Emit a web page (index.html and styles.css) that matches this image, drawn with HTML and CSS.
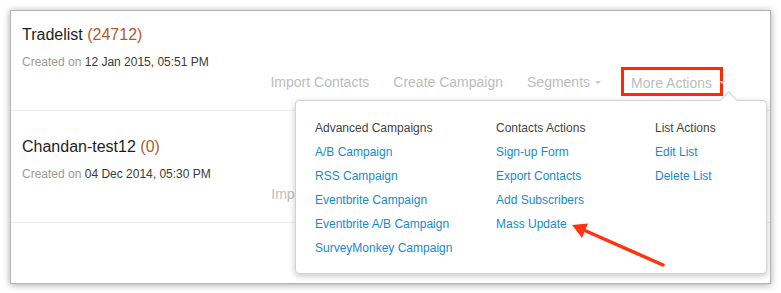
FILE: index.html
```html
<!DOCTYPE html>
<html lang="en">
<head>
<meta charset="UTF-8">
<title>Lists</title>
<link rel="stylesheet" href="styles.css">
</head>
<body>

<div class="card">
    <div class="row row-first">
        <div class="list-title">Tradelist <span class="count">(24712)</span></div>
        <div class="created"><span class="label">Created on</span> 12 Jan 2015, 05:51 PM</div>
        <div class="toolbar">
            <span class="tool">Import Contacts</span>
            <span class="tool">Create Campaign</span>
            <span class="tool">Segments<i class="caret"></i></span>
            <span class="tool more"><span class="hl">More Actions</span><i class="caret"></i></span>
        </div>
    </div>
    <div class="row">
        <div class="list-title">Chandan-test12 <span class="count">(0)</span></div>
        <div class="created"><span class="label">Created on</span> 04 Dec 2014, 05:30 PM</div>
        <!-- mostly covered by the open menu -->
        <div class="toolbar">
            <span class="tool covered-part">Import Contacts</span>
            <span class="tool covered">Create Campaign</span>
            <span class="tool covered">Segments<i class="caret"></i></span>
            <span class="tool more covered"><span class="plain">More Actions</span><i class="caret"></i></span>
        </div>
    </div>

    <!-- menu opened from More Actions -->
    <div class="dropdown">
        <div class="menu-col">
            <div class="menu-head">Advanced Campaigns</div>
            <a class="menu-link">A/B Campaign</a>
            <a class="menu-link">RSS Campaign</a>
            <a class="menu-link">Eventbrite Campaign</a>
            <a class="menu-link">Eventbrite A/B Campaign</a>
            <a class="menu-link">SurveyMonkey Campaign</a>
        </div>
        <div class="menu-col">
            <div class="menu-head">Contacts Actions</div>
            <a class="menu-link">Sign-up Form</a>
            <a class="menu-link">Export Contacts</a>
            <a class="menu-link">Add Subscribers</a>
            <a class="menu-link">Mass Update</a>
        </div>
        <div class="menu-col">
            <div class="menu-head">List Actions</div>
            <a class="menu-link">Edit List</a>
            <a class="menu-link">Delete List</a>
        </div>
    </div>

    <svg class="pointer" width="759" height="271" viewBox="0 0 759 271">
        <line x1="575" y1="220" x2="652" y2="254" stroke="#ff3212" stroke-width="3.5" stroke-linecap="round"/>
        <polygon points="561,214 577,212.5 571,227" fill="#ff3212"/>
    </svg>
</div>

</body>
</html>
```

FILE: styles.css
```css
body {
    margin: 0;
    padding: 10px;
    background: #fff;
    font-family: "Liberation Sans", Arial, sans-serif;
    color: #333;
}
.card {
    position: relative;
    height: 272px;
    border: 1px solid #b4b4b4;
    background: #fff;
    box-shadow: 0 1px 7px rgba(0, 0, 0, 0.35);
    overflow: hidden;
}
.row {
    padding: 26px 45px 14px 11px;
    border-bottom: 1px solid #ececec;
}
.row-first {
    padding-top: 14px;
}
.list-title {
    font-size: 16px;
    line-height: 20px;
    color: #1e1e1e;
}
.count {
    color: #b25a2c;
}
.created {
    margin-top: 10px;
    font-size: 12px;
    line-height: 14px;
    color: #3a3a3a;
}
.created .label {
    color: #9a9a9a;
}
.toolbar {
    display: flex;
    justify-content: flex-end;
    align-items: center;
    height: 29px;
    margin-top: -2px;
    font-size: 14px;
    color: #bcbcbc;
}
.tool {
    margin-left: 24px;
    display: flex;
    align-items: center;
}
.tool.more {
    margin-left: 20px;
}
.covered {
    visibility: hidden;
}
.covered-part {
    width: 24px;
    overflow: hidden;
    white-space: nowrap;
    margin-right: 74px;
}
.caret {
    display: inline-block;
    width: 0;
    height: 0;
    margin-left: 5px;
    margin-top: 2px;
    border-left: 3.5px solid transparent;
    border-right: 3.5px solid transparent;
    border-top: 3px solid #c8c8c8;
}
.more .caret {
    margin-left: -4px;
    position: relative;
}
.hl, .plain {
    display: inline-block;
    line-height: 20px;
    padding: 3px 8px 0 7px;
    border: 3px solid #ff2a00;
}
.plain {
    border-color: transparent;
}

/* dropdown */
.dropdown {
    position: absolute;
    left: 284px;
    top: 89px;
    width: 451px;
    height: 157px;
    padding: 15px 0 0 19px;
    border: 1px solid #d2d2d2;
    border-radius: 4px;
    background: #fff;
    box-shadow: 0 2px 6px rgba(0, 0, 0, 0.22);
    display: grid;
    grid-template-columns: 181px 159px 1fr;
    font-size: 12px;
}
.dropdown::before {
    content: "";
    position: absolute;
    left: 426px;
    top: -7px;
    width: 12px;
    height: 12px;
    background: #fff;
    border-top: 1px solid #d2d2d2;
    border-left: 1px solid #d2d2d2;
    transform: rotate(45deg);
}
.menu-col {
    display: flex;
    flex-direction: column;
}
.menu-head {
    line-height: 24px;
    color: #444;
}
.menu-link {
    line-height: 24px;
    color: #168ad0;
    cursor: pointer;
}
.pointer {
    position: absolute;
    left: 0;
    top: 0;
    pointer-events: none;
}
```
